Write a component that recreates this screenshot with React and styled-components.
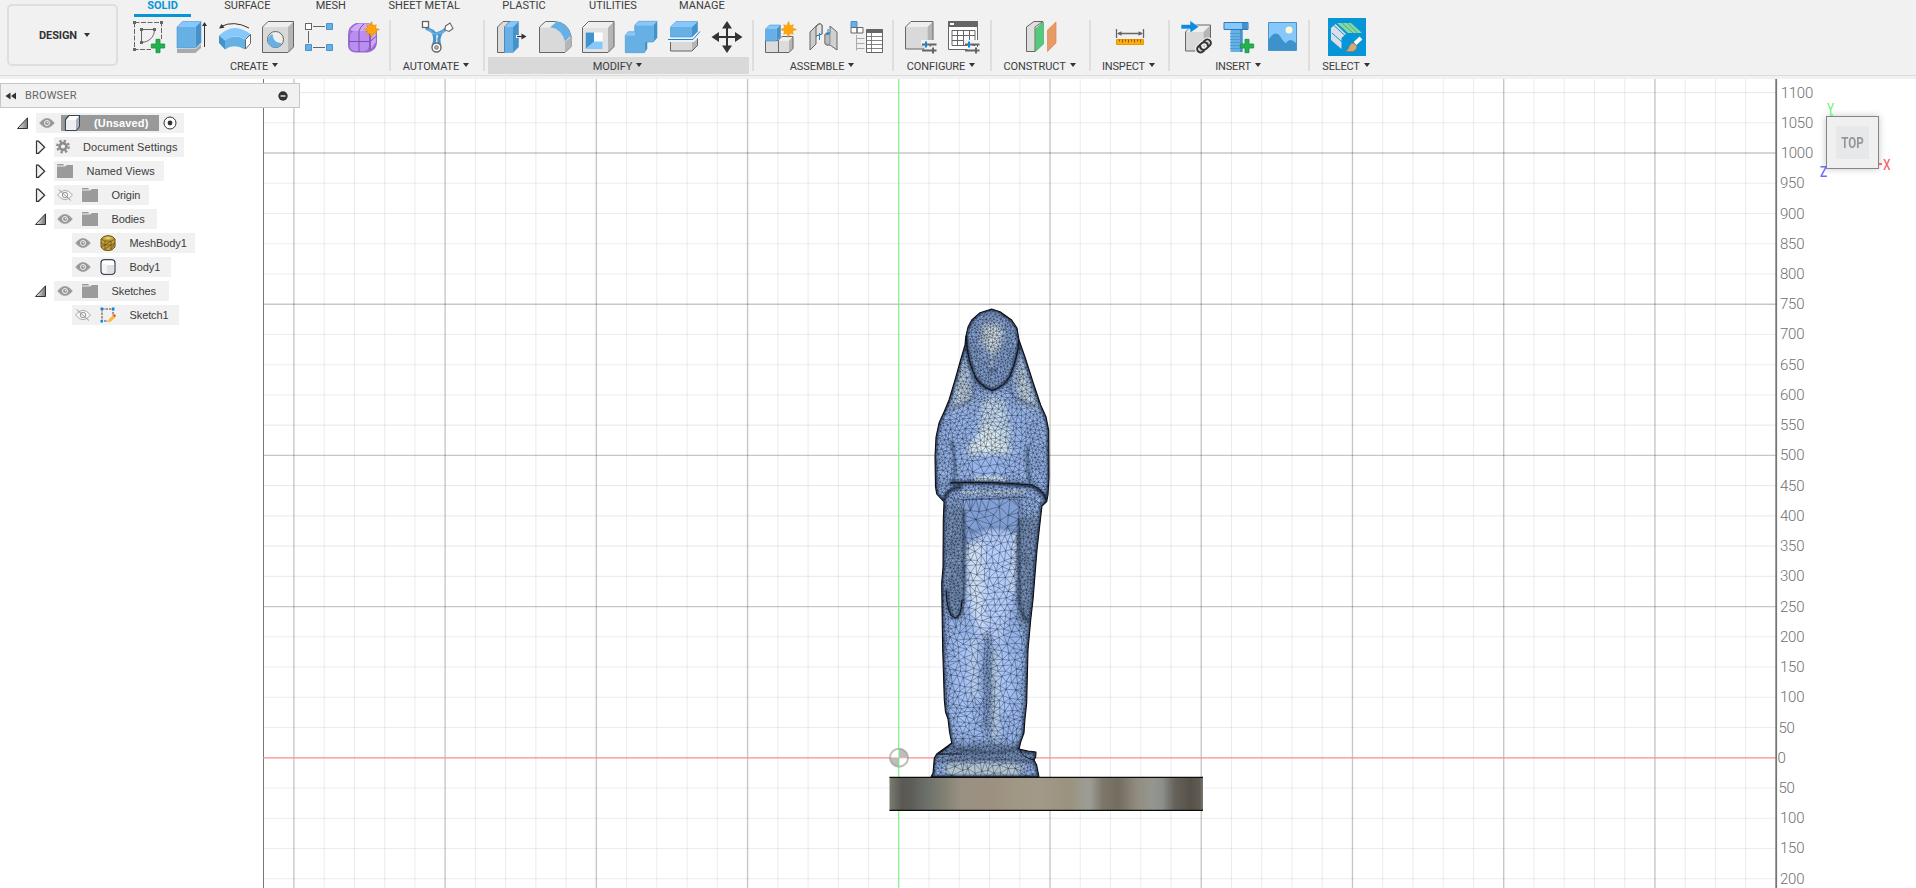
import React from "react";
import styled, { createGlobalStyle } from "styled-components";

const Global = createGlobalStyle`
  html, body { margin: 0; padding: 0; background: #fff; overflow: hidden; }
  body { font-family: "Liberation Sans", Arial, sans-serif; color: #3c3c3c; }
  * { box-sizing: border-box; }
`;

/* ---------- layout ---------- */

const Shell = styled.div`
  display: flex;
  flex-direction: column;
  width: 1916px;
  height: 888px;
  overflow: hidden;
`;

const Toolbar = styled.header`
  display: flex;
  flex: none;
  height: 79px;
  padding-left: 7px;
  background: #f1f1f1;
  border-bottom: 3px solid #f1f1f1;
  box-shadow: inset 0 -1px 0 #dbdbdb;
`;

const Workspace = styled.button`
  display: flex;
  align-items: center;
  justify-content: center;
  gap: 7px;
  width: 111px;
  height: 62px;
  margin: 4px 0 0;
  padding: 0 0 0 4px;
  border: 2px solid #dedede;
  border-radius: 5px;
  background: #f1f1f1;
  font: 700 11px Roboto, sans-serif;
  letter-spacing: -0.1px;
  color: #333;
`;

const Caret = styled.i`
  width: 0;
  height: 0;
  border: 3px solid transparent;
  border-top: 4px solid #333;
  border-bottom: 0;
`;

const Ribbon = styled.div`
  display: flex;
  flex-direction: column;
`;

const Tabs = styled.nav`
  display: flex;
  height: 18px;
  padding-left: 16px;
`;

const Tab = styled.div`
  width: ${(p) => p.$w}px;
  margin-right: 20.4px;
  height: 17px;
  font: ${(p) => (p.$on ? 700 : 400)} 11px/12px Roboto, sans-serif;
  letter-spacing: ${(p) => p.$ls || 0}px;
  text-align: center;
  white-space: nowrap;
  color: ${(p) => (p.$on ? "#0696d7" : "#3c3c3c")};
  border-bottom: 3px solid ${(p) => (p.$on ? "#0696d7" : "transparent")};
`;

const Groups = styled.div`
  display: flex;
  padding-left: 2px;
`;

const Group = styled.section`
  display: flex;
  flex-direction: column;
  width: ${(p) => p.$w}px;
  margin: 0 3px 0 4px;
`;

const Divider = styled.hr`
  width: 2px;
  height: 51px;
  margin: 2px -1px 0 0;
  border: 0;
  background: #dedede;
`;

const Icons = styled.div`
  display: flex;
  gap: 11px;
  height: 39px;
  padding: 3px 0 0 ${(p) => (p.$center ? 0 : 9)}px;
  justify-content: ${(p) => (p.$center ? "center" : "flex-start")};
`;

const Icon = styled.svg`
  flex: none;
  width: 32px;
  height: 32px;
  overflow: visible;
`;

const SelectTile = styled.div`
  width: 38px;
  height: 38px;
  margin-top: -3px;
  padding: 3px;
  background: #0696d7;
`;

const GroupLabel = styled.div`
  display: flex;
  align-items: center;
  justify-content: center;
  gap: 4px;
  height: 17px;
  padding: 1px 2px 0 0;
  background: ${(p) => (p.$on ? "#d9d9d9" : "transparent")};
  font: 400 11px Roboto, sans-serif;
  letter-spacing: ${(p) => p.$ls || 0}px;
  white-space: nowrap;
  ${Caret} { margin-top: -3px; }
`;

const Viewport = styled.main`
  position: relative;
  display: flex;
  flex: 1;
  min-height: 0;
  background: #fff;
`;

const Scene = styled.svg`
  flex: none;
  width: 1778px;
  height: 809px;
`;

const Ruler = styled.div`
  display: flex;
  flex-direction: column;
  height: 809px;
  margin-left: -1px;
  overflow: hidden;
`;

const Tick = styled.div`
  flex: none;
  height: 30.235px;
  padding-left: ${(p) => p.$pad}px;
  font: 300 15px/30.2px Roboto, sans-serif;
  letter-spacing: -0.25px;
  color: #707070;
  &:first-child { margin-top: -1.4px; }
`;

/* ---------- browser panel ---------- */

const Browser = styled.aside`
  position: absolute;
  left: 0;
  top: 4px;
  width: 300px;
`;

const BrowserHead = styled.div`
  display: flex;
  align-items: center;
  height: 25px;
  padding: 0 11px 0 4px;
  background: #f1f1f1;
  border: 1px solid #c6c6c6;
  font: 400 11px Roboto, sans-serif;
  letter-spacing: 0.15px;
  color: #666;
  svg:last-child { margin-left: auto; }
  span { margin-left: 9px; }
`;

const Tree = styled.div`
  display: flex;
  flex-direction: column;
  align-items: flex-start;
  gap: 4px;
  padding-top: 5px;
`;

const Row = styled.div`
  display: flex;
  height: 20px;
  padding-left: ${(p) => p.$x - 20}px;
  font-size: 11px;
  line-height: 20px;
  white-space: nowrap;
`;

const Arrow = styled.svg`
  flex: none;
  width: 20px;
  height: 20px;
`;

const RowBody = styled.div`
  display: flex;
  align-items: center;
  width: ${(p) => p.$w}px;
  background: #f1f1f1;
`;

const Eye = styled.svg`
  flex: none;
  width: 16px;
  height: 16px;
  margin: 0 0 0 3px;
`;

const NodeIcon = styled.svg`
  flex: none;
  width: 16px;
  height: 16px;
  margin-left: ${(p) => p.$ml}px;
`;

const RowText = styled.span`
  margin-left: ${(p) => p.$ml}px;
  letter-spacing: ${(p) => p.$ls || 0}px;
`;

const Selected = styled.div`
  display: flex;
  align-items: center;
  width: 98px;
  height: 16px;
  margin: 0 4px 0 6px;
  background: #999;
  color: #fff;
  font-weight: 700;
`;

/* ---------- view cube ---------- */

const CubeBox = styled.div`
  position: absolute;
  left: 1814px;
  top: 22px;
  width: 80px;
  height: 80px;
`;

const CubeFace = styled.div`
  position: absolute;
  left: 12px;
  top: 15px;
  display: flex;
  align-items: center;
  justify-content: center;
  width: 53px;
  height: 53px;
  border: 1px solid #858585;
  background: #f0f0f0;
  box-shadow: 0 0 7px rgba(0, 0, 0, 0.22);
`;

const CubeInner = styled.div`
  display: flex;
  align-items: center;
  justify-content: center;
  width: 33px;
  height: 33px;
  background: #e7e8e9;
  color: #94979b;
  font: 700 15px Roboto, sans-serif;
  span { transform: scaleX(0.77); }
`;

const Axis = styled.span`
  position: absolute;
  left: ${(p) => p.$x}px;
  top: ${(p) => p.$y}px;
  color: ${(p) => p.$c};
  font: 500 15px/16px Roboto, sans-serif;
  transform: scaleX(0.8);
`;

const AxisDot = styled.i`
  position: absolute;
  left: ${(p) => p.$x}px;
  top: ${(p) => p.$y}px;
  width: 3px;
  height: 2px;
  background: ${(p) => p.$c};
`;

/* ---------- icon parts ---------- */

const B = "#67b0e6";
const BL = "#86c8fb";
const BD = "#4492cc";
const G = "#666";

const Star = ({ x, y, r = 8 }) => {
  const pts = [];
  for (let i = 0; i < 16; i++) {
    const a = (i * Math.PI) / 8 - Math.PI / 2;
    const q = i % 2 ? r * 0.52 : i % 4 ? r * 0.85 : r;
    pts.push(`${(x + Math.cos(a) * q).toFixed(2)},${(y + Math.sin(a) * q).toFixed(2)}`);
  }
  return <polygon points={pts.join(" ")} fill="#ffa50a" stroke="#e09000" strokeWidth=".5" />;
};

const Plus = ({ x, y }) => (
  <path
    transform={`translate(${x} ${y})`}
    d="M-2-6.7h4v4.700h4.700v4H2v4.700h-4V2h-4.700v-4H-2z"
    fill="#27b050"
    stroke="#14923a"
    strokeWidth=".8"
  />
);

const Box = ({ x = 0.5, y = 0.5, w = 25.5, h = 25.5, d = 5.5, f = "#d9d9d9", t = "#efefef", s = "#b5b5b5", k = G, sw = 1 }) => (
  <g>
    <path d={`M${x} ${y + d}h${w}v${h}h${-w}z`} fill={f} />
    <path d={`M${x} ${y + d}l${d}${-d}h${w}l${-d} ${d}z`} fill={t} />
    <path d={`M${x + w} ${y + d}l${d}${-d}v${h}l${-d} ${d}z`} fill={s} />
    <path d={`M${x} ${y + d}l${d}${-d}h${w}v${h}l${-d} ${d}h${-w}z`} fill="none" stroke={k} strokeWidth={sw} />
  </g>
);

const Sliders = ({ x, y }) => (
  <g transform={`translate(${x} ${y})`}>
    <path d="M-8-4.500H8M-2-7v14M-4 2.500H8" stroke="#f1f1f1" strokeWidth="5" />
    <path d="M-7-2.500H7.500M-7 3.500H7.500" stroke={G} strokeWidth="1.800" />
    <path d="M-3-5.500v6" stroke="#0b8ce0" strokeWidth="2" />
    <path d="M4 .5v6" stroke={G} strokeWidth="2" />
  </g>
);

const icons = {
  sketch: (
    <>
      <path d="M1.500 1.500H28.500V18M1.500 1.500V28.500H18" fill="none" stroke={G} strokeDasharray="5 1.500" />
      <path d="M8.500 21.500V8.500H21.500C21.500 16 16 21 8.500 21.500" fill="none" stroke={G} />
      <path d="M0 0h3v3H0zM27 0h3v3h-3zM0 27h3v3H0zM7 7h3v3H7zM20 7h3v3h-3zM7 20h3v3H7z" fill={G} />
      <Plus x={25} y={25} />
    </>
  ),
  extrude: (
    <>
      <path d="M1 28h18.500l5.500-5v4l-5.500 5H1z" fill="#aaa" />
      <Box x={1} y={0.5} w={18.5} h={21} f={B} t={BL} s={BD} k="#4a94cc" sw={0.6} />
      <path d="M28.500 3V26" stroke="#333" />
      <path d="M28.500 1l2.500 4h-5z" fill="#333" />
    </>
  ),
  revolve: (
    <>
      <path d="M0 14.500Q15 0 32 13.500L26 18.500Q15 11.500 6 19.500z" fill={BL} />
      <path d="M0 14.500L6 19.500V28.500L0 22z" fill={BD} />
      <path d="M6 19.500Q15 12 26 18.500V28.500Q15 22 6 28.500z" fill={B} />
      <path d="M26.500 18.500l5-5v9l-5 5.500z" fill="#fff" stroke={G} />
      <path d="M2 5.500Q15-1 30 7" fill="none" stroke="#333" />
      <path d="M0 7.500L2.500 3l3 3.800z" fill="#333" />
    </>
  ),
  hole: (
    <>
      <Box />
      <circle cx="13.500" cy="18.500" r="8" fill="#eee" stroke={G} />
      <path d="M10.500 13A7 7 0 1 0 19.500 22Q11 22 10.500 13z" fill={B} />
    </>
  ),
  pattern: (
    <>
      <path d="M8 5.500h12M3.500 10v12M8 26.500h12" stroke={G} />
      <rect x=".5" y="2.500" width="6" height="6" fill="#fff" stroke={G} />
      <path d="M21.500 2.500h6v6h-6zM.5 23.500h6v6h-6zM21.500 23.500h6v6h-6z" fill={B} stroke="#4a94cc" />
    </>
  ),
  form: (
    <>
      <path d="M0 14Q0 5 8 2H20Q29 3 29 12V22Q28 30 20 31.500H7Q0 31 0 24z" fill="#9a6ace" />
      <path d="M2 9Q8 2 12 2.500H21L24 8Q20 11 16 10H5z" fill="#d0abfa" />
      <rect x="2" y="10" width="19" height="20" rx="5" fill="#ba8df0" />
      <path d="M23 12l5-3v12l-5 7z" fill="#c9a5f2" />
      <path d="M11 10v21M1 20.500H22L28.500 15M11 10q1-4 5-7M22 12v17" fill="none" stroke="#7c4caf" strokeWidth="1" />
      <Star x={23.5} y={8.5} />
    </>
  ),
  automate: (
    <>
      <path d="M5 7l6 3 4 3 6-2 5-4M11 9q5 8 1 16M21 10q-5 8-2 15" fill="none" stroke="#4a94cc" strokeWidth="3.200" />
      <path d="M7 8l6 5 7-1 6-4" fill="none" stroke={B} strokeWidth="2" />
      <rect x="1.500" y=".5" width="6" height="6" fill="#fff" stroke={G} strokeWidth="1.300" />
      <path d="M24.500 5l4.500-3 3 5.500-4 3-4-1.500z" fill="#fff" stroke={G} strokeWidth="1.100" />
      <circle cx="15.500" cy="26.500" r="4.500" fill="#fff" stroke={G} strokeWidth="1.400" />
      <circle cx="15.500" cy="26.500" r="1.800" fill="#bbb" stroke={G} />
    </>
  ),
  press: (
    <>
      <path d="M.5 31.500V6L6 .5H13L7.500 6V31.500z" fill="#dcdcdc" stroke={G} />
      <Box x={7.5} y={0.5} w={8.5} h={25.5} f={B} t={BL} s={BD} k="#3c8cc8" sw={0.5} />
      <path d="M19 15.500h8" stroke="#fff" strokeWidth="3" />
      <path d="M20 15.500h6" stroke="#333" strokeWidth="1.300" />
      <path d="M29.500 15.500l-5-3v6z" fill="#333" />
    </>
  ),
  fillet: (
    <>
      <path d="M-.5 31.500V6L5.500.5H14Q28 1 31 15V25.500L25 31.500z" fill="#efefef" stroke={G} />
      <path d="M0 31V6.500H9Q23 8 25 20V31z" fill="#d9d9d9" />
      <path d="M25 31V21l5.500-5v9z" fill="#b5b5b5" />
      <path d="M10 6.200L17 .5Q29 3 31 14.500L25 20.500Q22 8 10 6.200z" fill={B} />
    </>
  ),
  shell: (
    <>
      <Box x={-0.5} w={25.5} h={25} d={6} f="#e2e2e2" />
      <path d="M2.700 11.500h17v16.500h-17z" fill="#fff" />
      <path d="M2.700 11.500h8.300v9.500l-8.300 7z" fill={BD} />
      <path d="M11 20.500h8.700v7.500H2.700z" fill={BL} />
    </>
  ),
  combine: (
    <>
      <path d="M-.7 14.300l3-3.600h6.400v3.600zM8.700 4.300l3.600-4H31l-3.700 4z" fill={BL} />
      <path d="M27.300 4.300l3.700-4v16.400L27.300 21zM18.300 21H21v6.700l-2.700 4z" fill={BD} />
      <path d="M-.7 14.300H8.700V4.300H27.300V21H18.300V31.700H-.7z" fill={B} />
      <path d="M-.7 14.300l3-3.600h6.400V4.300l3.600-4H31v16.400L27.300 21H21v6.700l-2.700 4H-.7z" fill="none" stroke="#4a94cc" strokeWidth=".6" />
    </>
  ),
  split: (
    <>
      <Box x={1.5} y={14.500} w={21.500} h={10} />
      <path d="M-2 18.500H24L31 11" fill="none" stroke="#f1f1f1" strokeWidth="5" />
      <Box x={1.5} y={0.5} w={21.500} h={10} f={B} t={BL} s={BD} k="#4a94cc" sw={0.6} />
      <path d="M-1 18.500H24L31 10.500" fill="none" stroke="#0b8ce0" />
    </>
  ),
  move: (
    <>
      <path d="M15 4V28M3 16H27" stroke="#333" strokeWidth="2" />
      <path d="M15 0l5 7.500H10zM15 32l5-7.500H10zM-.5 16l7.500-5v10zM30.500 16l-7.500-5v10z" fill="#333" />
    </>
  ),
  component: (
    <>
      <Box x={12} y={15.500} w={11} h={12} d={4} f="#dcdcdc" />
      <path d="M-.5 19.500h13v12h-13z" fill="#dcdcdc" stroke={G} />
      <Box x={-0.5} y={4} w={11} h={12} d={4} f={B} t={BL} s={BD} k="#4a94cc" sw={0.6} />
      <Star x={22.5} y={8.5} />
    </>
  ),
  joint: (
    <>
      <path d="M1 11L8 4q3-3 5 0V13l-6 2v8l-6 6z" fill="#ccc" stroke={G} />
      <path d="M7 6v9l6-2V4q-3-3-6 2z" fill="#e3e3e3" stroke={G} />
      <path d="M21 5l7 6v18l-7-5q-6 1-5-3V13l5-1z" fill="#d0d0d0" stroke={G} />
      <path d="M16 14v8q2 3 5 1V12z" fill="#bbb" stroke={G} strokeWidth=".6" />
      <path d="M10.500 12v7M19 8v5" stroke="#0b8ce0" strokeWidth="1" />
      <path d="M19 14.500l-2-3h4z" fill="#0b8ce0" />
    </>
  ),
  bom: (
    <>
      <path d="M-1 .5h6v6h-6z" fill={B} stroke="#4a94cc" />
      <path d="M-1 6.500h6v5.500h-6zM5 6.500h6v5.500H5z" fill="#fff" stroke={G} />
      <path d="M4.500 14V29.500M4.500 17.500h8M4.500 22.500h8M4.500 27.500h8" stroke="#aaa" />
      <path d="M14.500 8.500h16v23h-16z" fill="#fff" stroke={G} />
      <path d="M14.500 8h16v4h-16z" fill={G} />
      <path d="M14.500 15.500h16M14.500 19.500h16M14.500 23.500h16M14.500 27.500h16M19.500 12v19" stroke={G} strokeWidth=".8" />
    </>
  ),
  configure: (
    <>
      <Box x={-0.5} w={22} h={22} />
      <Sliders x={23} y={26} />
    </>
  ),
  table: (
    <>
      <path d="M-.5.5h29v28h-29z" fill="#fff" stroke={G} />
      <path d="M-1 0h30v6H-1z" fill={G} />
      <path d="M1 2h4v2H1z" fill="#fff" />
      <path d="M3 9.500h23v15H3zM3 14.500h23M3 19.500h23M8.500 9.500v15M14.500 9.500v15M20.500 9.500v15" fill="none" stroke={G} />
      <Sliders x={23} y={26} />
    </>
  ),
  plane: (
    <>
      <path d="M1.500 30.500V6L9 .5H18L10 6V30.500z" fill="#dfdfdf" stroke={G} />
      <path d="M10.500 30.500V8L18.500 1V23z" fill="#57c97f" stroke="#3fae66" strokeWidth=".7" />
      <path d="M22.500 30.500V9L31 1V22z" fill="#e89a66" stroke="#d98650" strokeWidth=".7" />
    </>
  ),
  measure: (
    <>
      <path d="M2.500 8v9M29.500 8v9M4 12.500h24" stroke={G} strokeWidth="1.300" />
      <path d="M3 12.500l4.500-2.300v4.600zM29 12.500l-4.500-2.300v4.600z" fill={G} />
      <path d="M2.500 18.500h27v5h-27z" fill="#ffab0a" stroke="#ed9a00" />
      <path d="M5.500 18.500v2M8.500 18.500v3M11.500 18.500v2M14.500 18.500v3M17.500 18.500v2M20.500 18.500v3M23.500 18.500v2M26.500 18.500v3" stroke="#6b5520" strokeWidth=".9" />
    </>
  ),
  insert: (
    <>
      <Box x={3.500} y={4} w={18} h={19} d={7} />
      <path d="M-1 3.500H8V-.5l9 6.300L8 12V8H-1z" fill="#0b8ce0" stroke="#f1f1f1" strokeWidth=".6" />
      <g fill="none" transform="rotate(-42 22 25)">
        <path d="M13.500 25a4 4 0 0 1 4-3.500h5a3.700 3.700 0 0 1 0 7M30.500 25a4 4 0 0 1-4 3.500h-5a3.700 3.700 0 0 1 0-7M13.500 25a4 4 0 0 0 4 3.500h2M30.500 25a4 4 0 0 0-4-3.500h-2" stroke="#f1f1f1" strokeWidth="4" />
        <path d="M19.500 28.500h-2a3.500 3.500 0 0 1 0-7h5a3.500 3.500 0 0 1 2 6.300M24.500 21.500h2a3.500 3.500 0 0 1 0 7h-5a3.500 3.500 0 0 1-2-6.300" stroke="#333" strokeWidth="2" />
      </g>
    </>
  ),
  bolt: (
    <>
      <path d="M-1 1.500h24v7H-1z" fill={BL} stroke="#2f79b5" />
      <path d="M17 2h5.500v6H17z" fill={BD} />
      <path d="M5.500 9h12v22h-12z" fill={B} />
      <path d="M15 9h2.500v22H15z" fill={BD} />
      <path d="M5 12.500h13M5 15.500h13M5 18.500h13M5 21.500h13M5 24.500h13M5 27.500h13" stroke="#4f97cf" strokeWidth=".9" />
      <Plus x={22} y={25} />
    </>
  ),
  image: (
    <>
      <path d="M.5 1.500h28v28H.5z" fill={BL} stroke="#4a94cc" />
      <path d="M1 29V18Q7 9 12 15Q16 22 18 22Q22 16 28 22V29z" fill="#3e92cc" />
      <circle cx="21" cy="9" r="3.500" fill="#fdfbcf" />
    </>
  ),
  select: (
    <>
      <path d="M6 2H20L31 12H17z" fill="#86d6a6" />
      <path d="M11 2l11 10M16.500 2l10 10" stroke="#3ba971" strokeWidth=".9" />
      <path d="M0 7L4.500 3 15 13 10.500 17V28L0 19z" fill="#dcdfe6" />
      <path d="M1 12l10 9M3 4.500l11 10" stroke="#0696d7" strokeWidth="1" />
      <path d="M30 17L24 22.500" stroke="#fff" strokeWidth="4" />
      <path d="M14.500 30.500Q17 29 18 26Q19 22 22.500 22L26 25Q26 29 22 30.500z" fill="#d9a874" stroke="#8d6b45" strokeWidth=".5" />
    </>
  ),
};

const groups = [
  { name: "CREATE", w: 262, list: ["sketch", "extrude", "revolve", "hole", "pattern", "form"], ls: -0.25 },
  { name: "AUTOMATE", w: 86, list: ["automate"], center: true, ls: -0.1 },
  { name: "MODIFY", w: 261, list: ["press", "fillet", "shell", "combine", "split", "move"], on: true, ls: -0.1 },
  { name: "ASSEMBLE", w: 132, list: ["component", "joint", "bom"], ls: -0.05 },
  { name: "CONFIGURE", w: 90, list: ["configure", "table"], ls: -0.1 },
  { name: "CONSTRUCT", w: 91, list: ["plane"], center: true, ls: -0.1 },
  { name: "INSPECT", w: 71, list: ["measure"], center: true, ls: -0.15 },
  { name: "INSERT", w: 132, list: ["insert", "bolt", "image"], ls: -0.15 },
  { name: "SELECT", w: 68, list: ["select"], center: true, tile: true, ls: -0.2 },
];

const tabs = [
  ["SOLID", 57], ["SURFACE", 72], ["MESH", 54], ["SHEET METAL", 92],
  ["PLASTIC", 67], ["UTILITIES", 70], ["MANAGE", 67],
];

/* ---------- browser tree ---------- */

const EyeIcon = ({ off }) => (
  <Eye viewBox="0 0 16 16">
    <path d="M.5 8Q8-1.500 15.500 8Q8 17.500.5 8z" fill={off ? "#f6f6f6" : "#999"} stroke="#a0a0a0" strokeWidth={off ? 0.9 : 0.3} />
    {off ? (
      <>
        <circle cx="8" cy="8" r="2.700" fill="none" stroke="#999" />
        <path d="M1.500 2.500L14 13.500" stroke="#999" />
      </>
    ) : (
      <>
        <circle cx="8" cy="8" r="2.500" fill="none" stroke="#f1f1f1" strokeWidth="1" />
        <circle cx="8.500" cy="7.500" r=".7" fill="#f1f1f1" />
      </>
    )}
  </Eye>
);

const art = {
  cube: (
    <>
      <path d="M1.500 4.500L5 .5h10.500v11L12 15.500H1.500z" fill="#fff" stroke="#3c4654" strokeWidth="1.200" />
      <path d="M12 4.500l3-3.500v10.500L12 15z" fill="#aab0ba" />
      <path d="M2 5h10v10H2z" fill="#eceef1" />
    </>
  ),
  folder: (
    <path d="M0 1h6l1.500 1.500H0zM0 3.500h8l2-1.500h6V15H0z" fill="#9b9b9b" />
  ),
  gear: (
    <g fill="none" stroke="#8c8c8c">
      <circle cx="8" cy="7.500" r="3.400" strokeWidth="2.600" />
      <circle cx="8" cy="7.500" r="5.700" strokeWidth="2.400" strokeDasharray="2.300 2.177" />
    </g>
  ),
  mesh: (
    <>
      <path d="M1 4L4 1.500 8 .5l4.500 1L15 4v8l-3 2.800-4 1-4.500-1L1 12z" fill="#c3a13e" stroke="#6d5310" />
      <path d="M1 4l4 2 6 .2L15 4M5 6v9M11 6v9M1 8l4 2h6l4-2M1 12l4-2M5 14l6-4M5 10l6-4M11 14l4-6" fill="none" stroke="#6d5310" strokeWidth=".8" />
      <path d="M4 3l4-1.500L12 3 8 4.500z" fill="#e4cb72" />
    </>
  ),
  body: (
    <>
      <path d="M1 4Q1 1 4 .7h8Q15 1 15 4v8q0 3-3 3.300H4Q1 15 1 12z" fill="#fff" stroke="#3c4654" strokeWidth="1.200" />
      <path d="M4.500 6H14v6q0 2-3 2.500H4.500z" fill="#dfe1e6" />
      <path d="M2 5h5v9H4q-2 0-2-2z" fill="#f4f5f7" />
    </>
  ),
  sketch: (
    <>
      <path d="M2 2h11v7M2 2v12h6" fill="none" stroke="#444" strokeDasharray="2.500 1" />
      <path d="M.5.5h2.500V3H.5zM12 .5h2.500V3H12zM.5 13h2.500v2.500H.5z" fill="#0b8ce0" />
      <path d="M8 15.500l1-3.500 4.500-4 2 2-4.500 4.500z" fill="#ffb733" />
      <path d="M13 8.200l1.500-1.200 1.500 1.700-1.300 1.500z" fill="#e8453c" />
    </>
  ),
};

const tree = [
  { x: 54, w: 130, icon: "gear", iml: 1, tml: 12, text: "Document Settings", ls: 0.1 },
  { x: 54, w: 110, icon: "folder", iml: 3, tml: 13.5, text: "Named Views", ls: 0.05 },
  { x: 54, w: 95, eye: "off", icon: "folder", iml: 9, tml: 13.5, text: "Origin", ls: -0.1 },
  { x: 54, w: 103, eye: "on", icon: "folder", iml: 9, tml: 13.5, text: "Bodies", open: true, ls: -0.1 },
  { x: 72, w: 123, eye: "on", icon: "mesh", iml: 9, tml: 13.5, text: "MeshBody1", leaf: true, ls: -0.1 },
  { x: 72, w: 99, eye: "on", icon: "body", iml: 9, tml: 13.5, text: "Body1", leaf: true, ls: -0.1 },
  { x: 54, w: 115, eye: "on", icon: "folder", iml: 9, tml: 13.5, text: "Sketches", open: true, ls: -0.1 },
  { x: 72, w: 107, eye: "off", icon: "sketch", iml: 9, tml: 13.5, text: "Sketch1", leaf: true, ls: -0.1 },
];

const Twisty = ({ open, leaf }) => (
  <Arrow viewBox="0 0 20 20">
    {!leaf && (open
      ? <path d="M1.500 15.500H11.500V4.800z" fill="url(#tw)" stroke="#333" />
      : <path d="M2.500 4.200V16.300L4.500 16.300 10.700 10.200 4.500 4.200z" fill="#f1f1f1" stroke="#333" strokeWidth="1.200" />)}
  </Arrow>
);

/* ---------- mesh statue ---------- */

const OUTLINE =
  "M991.700 309L980 312.700 971.700 320 968 327 965.700 337 965 345 960 362 955 380 949 400 944 412 939 423 936 437 935 457 935.500 487 936.700 494 944 502 943.300 520 943 567 941.700 583 942 607 942.700 650 944.300 700 945.500 712 948 719 949.500 732 951.700 743 945 748 936.700 754 934.300 758 933 773 931 777H1039L1036.700 765 1034 760 1035.700 757 1036 752 1028 751 1019 749 1020.700 742 1024 733 1024.900 720 1026.700 703 1028 650 1030.700 620 1033 600 1037 550 1040.700 517 1042 506 1046.700 501.700 1048 495 1049 477 1048.700 430 1046 416.700 1040.700 405 1033 382 1025 357 1019 340 1017 328 1011.700 320 1000 311.700z";

const inEllipse = (x, y, cx, cy, rx, ry) => ((x - cx) / rx) ** 2 + ((y - cy) / ry) ** 2 < 1;

function spacing(x, y) {
  if (y < 395 && inEllipse(x, y, 992, 350, 28, 42)) return 2.5;
  if (y < 405) return 3;
  if (x > 966 && x < 1018 && y > 500 && y < 533) return 9;
  if (y > 478 && y < 500) return 2.7;
  if (y < 480) {
    if (inEllipse(x, y, 987, 468, 17, 12)) return 7.5;
    return x < 952 || x > 1030 ? 3.2 : 4;
  }
  if (y < 620 && (x < 964 || x > 1016)) return 2.7;
  if (y > 743) return y > 764 && x > 948 && x < 1020 ? 6.5 : 3;
  if (x < 949 || x > 1021) return 3;
  if (x > 983 && x < 992 && y > 630) return 3;
  return y < 700 ? 5.6 : 4.6;
}

function samplePoints() {
  let seed = 90210;
  const rnd = () => {
    seed = (seed + 0x6d2b79f5) | 0;
    let t = Math.imul(seed ^ (seed >>> 15), 1 | seed);
    t = (t + Math.imul(t ^ (t >>> 7), 61 | t)) ^ t;
    return ((t ^ (t >>> 14)) >>> 0) / 4294967296;
  };
  const cells = new Map();
  const pts = [];
  for (let i = 0; i < 34000; i++) {
    const x = 928 + rnd() * 128;
    const y = 304 + rnd() * 480;
    const r = spacing(x, y) * (0.8 + 0.35 * rnd());
    const cx = Math.floor(x / 12);
    const cy = Math.floor(y / 12);
    let ok = true;
    for (let a = -1; a <= 1 && ok; a++)
      for (let b = -1; b <= 1 && ok; b++)
        for (const p of cells.get((cx + a) * 1000 + cy + b) || [])
          if ((p[0] - x) ** 2 + (p[1] - y) ** 2 < r * r) { ok = false; break; }
    if (!ok) continue;
    const p = [x, y];
    pts.push(p);
    const key = cx * 1000 + cy;
    if (!cells.has(key)) cells.set(key, []);
    cells.get(key).push(p);
  }
  return pts;
}

/* Sweep-line Delaunay triangulation; returns one path of unique edges. */
function meshPath() {
  const pts = samplePoints().sort((a, b) => a[0] - b[0]);
  const n = pts.length;
  pts.push([-9000, -9000], [11000, -9000], [1000, 20000]);
  const circ = (i, j, k) => {
    const [ax, ay] = pts[i], [bx, by] = pts[j], [cx, cy] = pts[k];
    const d = 2 * (ax * (by - cy) + bx * (cy - ay) + cx * (ay - by));
    const a2 = ax * ax + ay * ay, b2 = bx * bx + by * by, c2 = cx * cx + cy * cy;
    const x = (a2 * (by - cy) + b2 * (cy - ay) + c2 * (ay - by)) / d;
    const y = (a2 * (cx - bx) + b2 * (ax - cx) + c2 * (bx - ax)) / d;
    return { v: [i, j, k], x, y, r: (ax - x) ** 2 + (ay - y) ** 2 };
  };
  let open = [circ(n, n + 1, n + 2)];
  const done = [];
  for (let i = 0; i < n; i++) {
    const [px, py] = pts[i];
    const edges = new Map();
    const keep = [];
    for (const t of open) {
      const dx = px - t.x;
      if (dx > 0 && dx * dx > t.r) { done.push(t); continue; }
      if (dx * dx + (py - t.y) ** 2 > t.r) { keep.push(t); continue; }
      for (const [a, b] of [[0, 1], [1, 2], [2, 0]]) {
        const u = Math.min(t.v[a], t.v[b]), w = Math.max(t.v[a], t.v[b]);
        const key = u * 100000 + w;
        if (edges.has(key)) edges.set(key, null);
        else edges.set(key, [u, w]);
      }
    }
    open = keep;
    for (const e of edges.values()) if (e) open.push(circ(e[0], e[1], i));
  }
  const seen = new Set();
  let d = "";
  for (const t of done.concat(open)) {
    for (const [a, b] of [[0, 1], [1, 2], [2, 0]]) {
      const u = Math.min(t.v[a], t.v[b]), w = Math.max(t.v[a], t.v[b]);
      if (w >= n || seen.has(u * 100000 + w)) continue;
      seen.add(u * 100000 + w);
      d += `M${pts[u][0].toFixed(1)} ${pts[u][1].toFixed(1)}L${pts[w][0].toFixed(1)} ${pts[w][1].toFixed(1)}`;
    }
  }
  return d;
}

const MESH = meshPath();

const Statue = () => (
  <g>
    <clipPath id="body"><path d={OUTLINE} /></clipPath>
    <filter id="soft" x="-50%" y="-50%" width="200%" height="200%"><feGaussianBlur stdDeviation="3" /></filter>
    <filter id="fine" x="-50%" y="-50%" width="200%" height="200%"><feGaussianBlur stdDeviation="1.300" /></filter>
    <g clipPath="url(#body)">
      <path d={OUTLINE} fill="#97b5ea" />
      <g filter="url(#soft)">
        <ellipse cx="991" cy="350" rx="26" ry="40" fill="#8ba8d8" />
        <path d="M982 325h19v20l-7 10-11-10z" fill="#dce8ee" />
        <path d="M962 358l5 12 5 30-20 10zM1020 355l-4 22 3 24 20 10z" fill="#c2d2de" />
        <path d="M983 397h20l9 40-10 12h-26z" fill="#c3d8ee" />
        <path d="M966 450l22-26 24 26-4 4h-40z" fill="#dfecf2" />
        <path d="M966 499h56v33l-56 12z" fill="#809fd4" />
        <path d="M969 545L988 530l25 2 3 50-14 60-20 10-16-52z" fill="#b4ccfa" />
        <path d="M966 548l16-10 2 100-14-40z" fill="#cfe0f4" />
        <path d="M956 635l12 5 4 90h-14zM998 640l16 20-4 60-12-8z" fill="#a6c2f6" />
        <path d="M970 640l6 0 2 60h-6z" fill="#c2d6ee" />
        <path d="M984 635h8v95h-8z" fill="#7590c0" />
        <path d="M994 650h4v90h-5z" fill="#c4d6de" />
        <path d="M946 763h75v14h-75z" fill="#b4c4cc" />
        <path d="M943 505h21v110h-16zM1018 515h22l-8 110h-14z" fill="#7b95bd" />
        <path d="M936 743h100v16H936z" fill="#6f89b2" />
      </g>
      <g filter="url(#fine)" fill="none">
        <path d="M966 335Q967 362 977 380Q984 388 992 390Q1004 387 1010 376Q1018 356 1019 340" stroke="#34425c" strokeWidth="3.500" />
        <path d="M973 370l1 26q-6 8-22 12M1009 382l1 10q8 10 28 14" stroke="#5d7396" strokeWidth="2.500" strokeOpacity=".7" />
        <path d="M951 440Q956 455 954 482M1028 445Q1026 460 1030 482" stroke="#475c80" strokeWidth="3" strokeOpacity=".8" />
        <path d="M950 483Q985 481 1032 486 1044 492 1046 500M944 500Q947 488 962 487" stroke="#35445f" strokeWidth="4" />
        <path d="M962 492.500H1026" stroke="#cbd8dc" strokeWidth="2.500" />
        <path d="M974 479q18-3 32 1" stroke="#e0ebee" strokeWidth="3" />
        <path d="M964 510V590Q962 618 955 618Q948 615 947 590M1019 520V600Q1022 622 1029 619" stroke="#3a4b69" strokeWidth="3" strokeOpacity=".85" />
        <path d="M970 533Q992 522 1016 531" stroke="#6882b0" strokeWidth="2" />
        <path d="M1014 533l-2 60" stroke="#d6e2e8" strokeWidth="2" />
        <path d="M992 345v22" stroke="#d4dde0" strokeWidth="1.500" />
        <path d="M988 370h9" stroke="#35445f" strokeWidth="2" strokeOpacity=".8" />
        <path d="M953 748Q990 757 1018 748M938 761Q990 757 1034 762" stroke="#43546f" strokeWidth="2" strokeOpacity=".8" />
        <path d={OUTLINE} stroke="#2b3a55" strokeWidth="4" strokeOpacity=".85" />
      </g>
      <path d={MESH} fill="none" stroke="#141c2a" strokeWidth=".58" strokeOpacity=".62" />
      <g fill="none" stroke="#0c121c" strokeWidth="1">
        <path d="M966 335Q967 362 977 380Q984 388 992 390.500Q1004 387 1010 376Q1018 356 1019 340" />
        <path d="M950 483Q985 481 1032 485 1044 490 1046 500M946 590Q947 616 955 618Q961 618 962 600" />
        <path d="M944 500Q950 494 954 500L1026 497Q1036 498 1042 506" strokeOpacity=".4" />
        <path d="M951.700 743L945 749 938 754H962M1020 749Q1022 758 1034 760" />
      </g>
    </g>
    <path d={OUTLINE} fill="none" stroke="#0c1016" strokeWidth="1.100" strokeLinejoin="round" />
  </g>
);

const plateStops = [
  [0, "#7a7b73"], [4, "#5a5852"], [7, "#5d5d58"], [12, "#6c706b"], [17, "#807f72"], [23, "#9a9183"],
  [32, "#9c9080"], [40, "#a09784"], [48, "#a19a88"], [57, "#9b927f"], [61, "#9c998c"], [64, "#9c9d96"],
  [68, "#7d776a"], [73, "#736c60"], [79, "#928d80"], [84, "#94978f"], [87, "#8b8f8c"], [91, "#65625a"],
  [96, "#57514a"], [99, "#605c52"], [100, "#7a766a"],
];

const STEP = 30.245;
const X0 = 898.7;
const Y0 = 757.7;

const Grid = () => {
  const lines = [];
  for (let i = -20; i <= 28; i++) {
    if (i === 0) continue;
    const x = X0 + i * STEP + 0.1;
    lines.push(<path key={`v${i}`} d={`M${x} 79V888`} stroke="#000" strokeOpacity={i % 5 ? 0.075 : 0.22} strokeWidth={i % 5 ? 1.1 : 1.4} />);
  }
  for (let j = -22; j <= 4; j++) {
    if (j === 0) continue;
    const y = Y0 + j * 30.235 + 0.05;
    lines.push(<path key={`h${j}`} d={`M263.500 ${y}H1776`} stroke="#000" strokeOpacity={j % 5 ? 0.075 : 0.22} strokeWidth={j % 5 ? 1.1 : 1.4} />);
  }
  return <g>{lines}</g>;
};

const ticks = Array.from({ length: 27 }, (_, i) => Math.abs(1100 - i * 50));
const tickPad = { 1: 0.4, 2: 1.5, 3: 3, 4: 3.7 };

export default function App() {
  return (
    <Shell>
      <Global />
      <Toolbar>
        <Workspace>DESIGN <Caret /></Workspace>
        <Ribbon>
          <Tabs>
            {tabs.map(([t, w], i) => <Tab key={t} $w={w} $on={i === 0}>{t}</Tab>)}
          </Tabs>
          <Groups>
            {groups.map((g, i) => (
              <React.Fragment key={g.name}>
                <Group $w={g.w}>
                  <Icons $center={g.center}>
                    {g.list.map((k) =>
                      g.tile
                        ? <SelectTile key={k}><Icon viewBox="0 0 32 32">{icons[k]}</Icon></SelectTile>
                        : <Icon key={k} viewBox="0 0 32 32">{icons[k]}</Icon>
                    )}
                  </Icons>
                  <GroupLabel $on={g.on} $ls={g.ls}>{g.name}<Caret /></GroupLabel>
                </Group>
                {i < groups.length - 1 && <Divider />}
              </React.Fragment>
            ))}
          </Groups>
        </Ribbon>
      </Toolbar>

      <Viewport>
        <Scene viewBox="0 79 1778 809">
          <defs>
            <linearGradient id="plate">
              {plateStops.map(([o, c]) => <stop key={o} offset={`${o}%`} stopColor={c} />)}
            </linearGradient>
            <linearGradient id="tw" x1="0" y1="0" x2="1" y2="0">
              <stop offset="0" stopColor="#eee" /><stop offset="1" stopColor="#777" />
            </linearGradient>
          </defs>
          <Grid />
          <path d="M263.500 79V888" stroke="#777" />
          <path d={`M${X0} 79V888`} stroke="#7cf582" strokeWidth="1.200" />
          <path d={`M263 ${Y0 + 0.1}H1776`} stroke="#f88" strokeWidth="1.300" />
          <path d="M1776.200 79V888" stroke="#747678" strokeWidth="1.800" />
          <g transform="translate(899 757.700)">
            <circle r="9" fill="#fff" fillOpacity=".6" stroke="#999" strokeOpacity=".65" strokeWidth="2" />
            <path d="M0 0V-9A9 9 0 0 1 9 0zM0 0V9A9 9 0 0 1-9 0z" fill="#999" fillOpacity=".65" />
            <path d="M0-10V10" stroke="#7cf582" strokeOpacity=".8" />
          </g>
          <Statue />
          <rect x="889.500" y="777" width="313.500" height="33.500" fill="url(#plate)" />
          <path d="M889.500 777.300H1203M889.500 810.400H1203" stroke="#0c0c0c" strokeWidth="1.200" />
        </Scene>
        <Ruler>
          {ticks.map((t, i) => <Tick key={i} $pad={tickPad[String(t).length]}>{t}</Tick>)}
        </Ruler>

        <Browser>
          <BrowserHead>
            <svg width="11" height="8" viewBox="0 0 11 8"><path d="M5.500.5v7L.5 4zM11 .5v7L6 4z" fill="#333" /></svg>
            <span>BROWSER</span>
            <svg width="10" height="10" viewBox="0 0 10 10">
              <circle cx="5" cy="5" r="4.700" fill="#333" /><path d="M2.500 5h5" stroke="#fff" strokeWidth="1.300" />
            </svg>
          </BrowserHead>
          <Tree>
            <Row $x={36}>
              <Twisty open />
              <RowBody $w={148}>
                <EyeIcon />
                <Selected>
                  <NodeIcon $ml={3} viewBox="0 0 16 16">{art.cube}</NodeIcon>
                  <RowText $ml={14} $ls={0.15}>(Unsaved)</RowText>
                </Selected>
                <svg width="14" height="14" viewBox="0 0 14 14">
                  <circle cx="7" cy="7" r="6" fill="#fff" stroke="#333" /><circle cx="7" cy="7" r="2.400" fill="#333" />
                </svg>
              </RowBody>
            </Row>
            {tree.map((r) => (
              <Row key={r.text} $x={r.x}>
                <Twisty open={r.open} leaf={r.leaf} />
                <RowBody $w={r.w}>
                  {r.eye && <EyeIcon off={r.eye === "off"} />}
                  <NodeIcon $ml={r.iml} viewBox="0 0 16 16">{art[r.icon]}</NodeIcon>
                  <RowText $ml={r.tml} $ls={r.ls}>{r.text}</RowText>
                </RowBody>
              </Row>
            ))}
          </Tree>
        </Browser>

        <CubeBox>
          <CubeFace><CubeInner><span>TOP</span></CubeInner></CubeFace>
          <Axis $x={12} $y={0} $c="#7df58a">Y</Axis>
          <AxisDot $x={15.500} $y={13} $c="#7df58a" />
          <AxisDot $x={65} $y={62} $c="#fa6b6b" />
          <Axis $x={68} $y={56} $c="#fa6b6b">X</Axis>
          <Axis $x={4.500} $y={63} $c="#6b6bfa">Z</Axis>
        </CubeBox>
      </Viewport>
    </Shell>
  );
}
